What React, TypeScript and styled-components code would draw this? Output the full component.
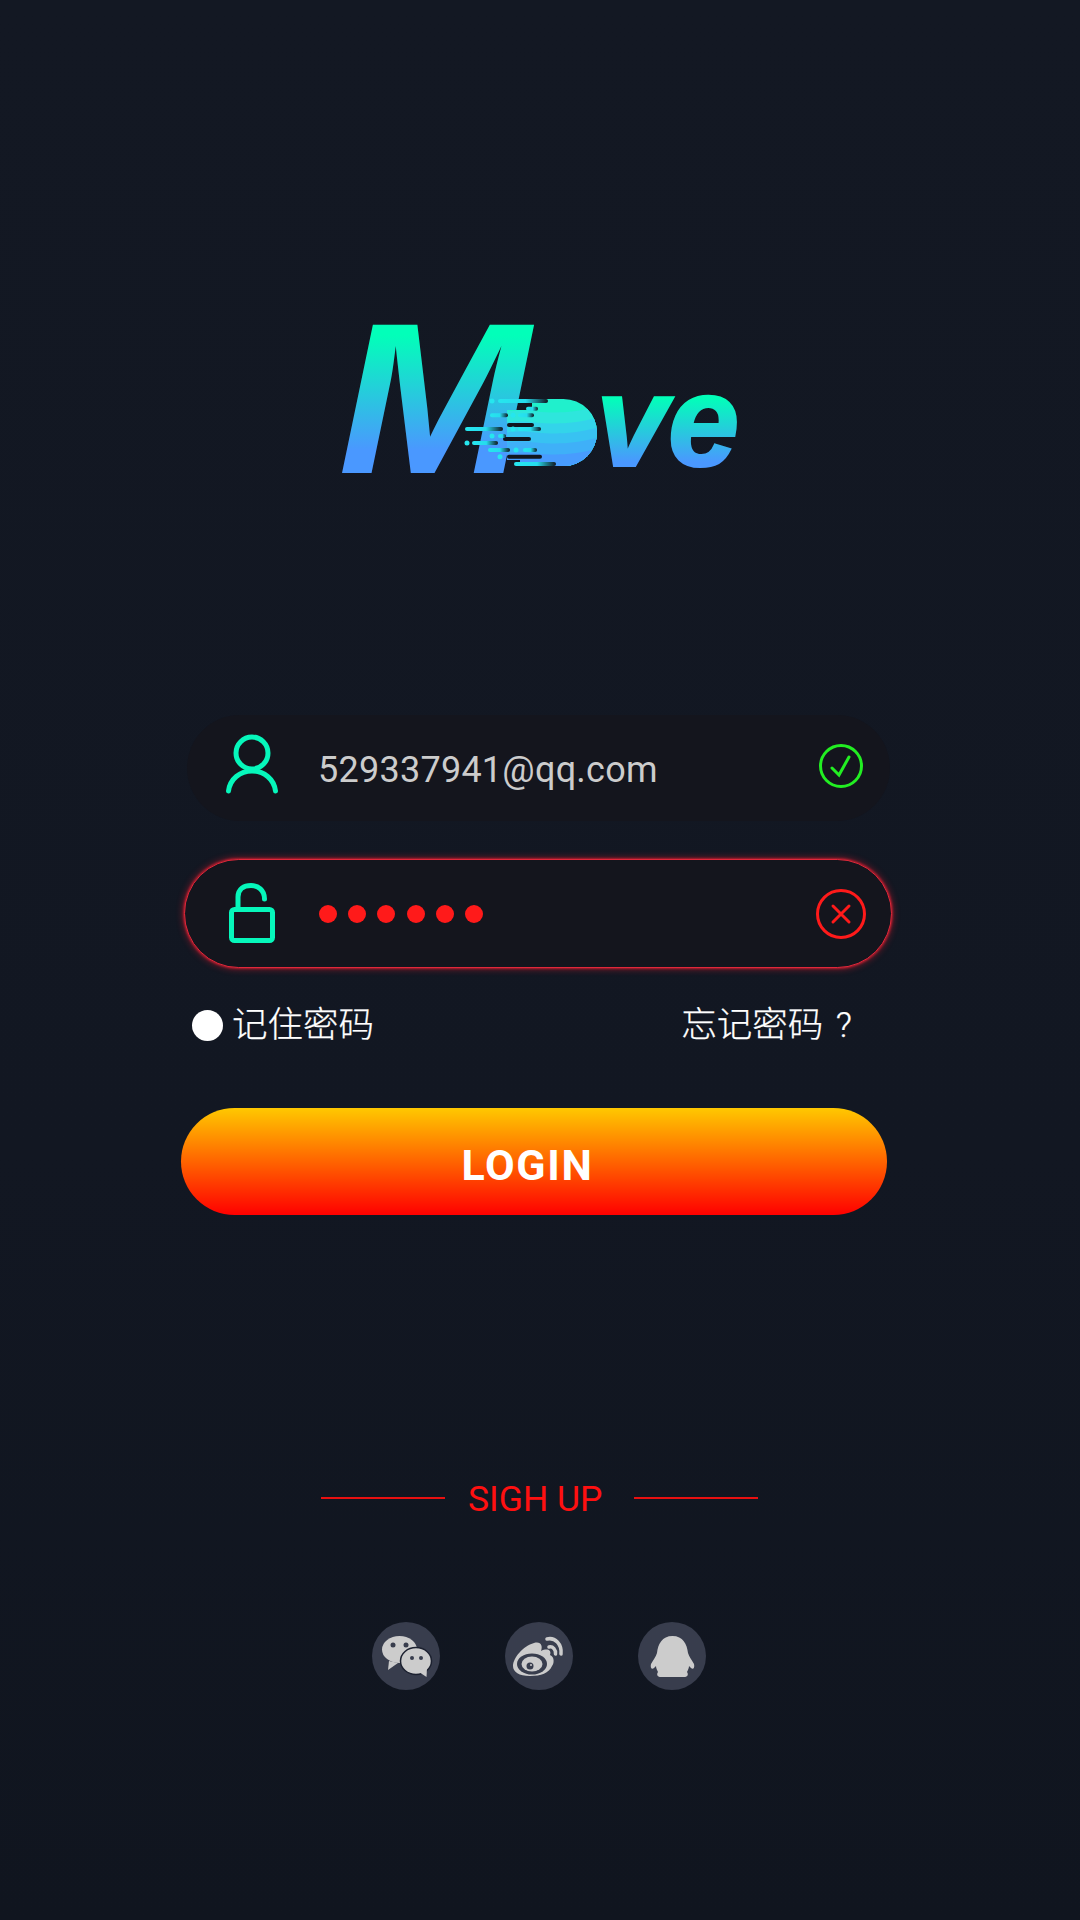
import { createGlobalStyle } from "styled-components";
import styled from "styled-components";

const GlobalStyle = createGlobalStyle`
  html, body {
    margin: 0;
    padding: 0;
    background: #121722;
  }
`;

const SANS = `Roboto, "Noto Sans CJK SC", sans-serif`;

const Page = styled.div`
  box-sizing: border-box;
  width: 1080px;
  height: 1920px;
  padding-top: 270px;
  overflow: hidden;
  background: linear-gradient(180deg, #131823 0%, #121722 60%, #10151f 100%);
  font-family: ${SANS};
`;

const LogoSvg = styled.svg`
  display: block;
  margin-left: 330px;
`;

const LogoWord = styled.text`
  font-family: "Liberation Sans", Arial, sans-serif;
  font-weight: 700;
  font-style: italic;
`;

const InputRow = styled.div<{ $error?: boolean }>`
  box-sizing: border-box;
  display: flex;
  align-items: center;
  margin-left: ${({ $error }) => ($error ? 184 : 187)}px;
  margin-top: ${({ $error }) => ($error ? 38 : 195)}px;
  width: ${({ $error }) => ($error ? 708 : 703)}px;
  height: ${({ $error }) => ($error ? 109 : 106)}px;
  padding: 0 ${({ $error }) => ($error ? 25 : 24)}px 0
    ${({ $error }) => ($error ? 38 : 36)}px;
  border-radius: 55px;
  background: #14151d;
  border: ${({ $error }) => ($error ? "1px solid #e0283a" : "none")};
  box-shadow: ${({ $error }) =>
    $error
      ? "0 0 2px 1px rgba(230, 30, 50, 0.6), 0 0 7px 1px rgba(255, 30, 50, 0.45)"
      : "none"};
`;

const FieldIcon = styled.svg`
  flex: none;
  margin-right: 35px;
`;

const FieldText = styled.span`
  flex: 1;
  padding-top: 3px;
  font-size: 36px;
  line-height: 40px;
  letter-spacing: 0.25px;
  color: #cccccc;
`;

const Dots = styled.div`
  flex: 1;
  display: flex;
  gap: 11.2px;
  padding-left: 1px;
`;

const Dot = styled.span`
  width: 18px;
  height: 18px;
  border-radius: 50%;
  background: #ff1a1a;
`;

const Options = styled.div`
  display: flex;
  justify-content: space-between;
  align-items: center;
  margin: 37px 0 0 192px;
  width: 660px;
  height: 40px;
  color: #ffffff;
  font-size: 35.5px;
  font-weight: 300;
  line-height: 40px;
  word-spacing: 4px;
  -webkit-text-stroke: 0.25px #ffffff;
`;

const Remember = styled.label`
  display: flex;
  align-items: center;
  gap: 9px;
`;

const Radio = styled.span`
  width: 31px;
  height: 31px;
  border-radius: 50%;
  background: #ffffff;
`;

const LoginButton = styled.button`
  display: block;
  box-sizing: border-box;
  margin: 63px 0 0 181px;
  width: 706px;
  height: 107px;
  padding: 7px 13px 0 0;
  border: none;
  border-radius: 54px;
  background: linear-gradient(180deg, #ffc800 0%, #ff0000 100%);
  color: #ffffff;
  font-family: ${SANS};
  font-size: 43px;
  font-weight: 700;
  letter-spacing: 1.6px;
`;

const SignUp = styled.div`
  display: flex;
  align-items: center;
  margin: 263px 0 0 321px;
  height: 40px;
  color: #ff1010;
  font-size: 35.5px;
  line-height: 40px;
`;

const SignLine = styled.span`
  width: 124px;
  height: 2px;
  background: #e81010;
`;

const SignText = styled.span`
  margin: 2px 32px 0 23px;
`;

const Socials = styled.div`
  display: flex;
  gap: 65px;
  margin: 104px 0 0 372px;
`;

const SocialButton = styled.svg`
  display: block;
  width: 68px;
  height: 68px;
`;

const WAVES: [number, string][] = [
  [412, "#2ee6dc"],
  [423, "#33d4ea"],
  [433, "#38c2f2"],
  [443, "#3fb0f8"],
  [454, "#489cfe"],
];

// x, width, y of each streak crossing the logo's "o"
const STREAKS: [number, number, number][] = [
  [498, 50, 401],
  [526, 12, 408.7],
  [490, 18, 415.3],
  [518, 16, 415.3],
  [465, 38, 429],
  [518, 23, 429],
  [498, 8, 436],
  [472, 26, 443],
  [488, 22, 450],
  [523, 14, 450],
  [514, 42, 464],
];

const DARK_STREAKS: [number, number, number][] = [
  [507, 27, 425],
  [503, 28, 439],
  [507, 35, 456.7],
];

const STREAK_DOTS: [number, number][] = [
  [492, 401],
  [513, 415.3],
  [513, 429],
  [492, 436],
  [467, 443],
  [516, 450],
  [500, 456.7],
];

function Logo() {
  return (
    <LogoSvg width={420} height={250} viewBox="330 270 420 250">
      <defs>
        <linearGradient id="mFill" gradientUnits="userSpaceOnUse" x1="0" y1="335" x2="0" y2="450">
          <stop offset="0" stopColor="#02ffb9" />
          <stop offset="1" stopColor="#4a98ff" />
        </linearGradient>
        <linearGradient id="veFill" gradientUnits="userSpaceOnUse" x1="0" y1="398" x2="0" y2="462">
          <stop offset="0" stopColor="#02ffb9" />
          <stop offset="1" stopColor="#4a98ff" />
        </linearGradient>
        <linearGradient id="streak">
          <stop offset="0" stopColor="#26e6ee" />
          <stop offset="0.55" stopColor="#26dcee" />
          <stop offset="1" stopColor="#11161f" />
        </linearGradient>
        <clipPath id="blob">
          <path d="M532 399H563.500A33.500 33.500 0 0 1 563.500 466H520V460H507V410H532Z" />
        </clipPath>
      </defs>
      <LogoWord
        x={338}
        y={473}
        fontSize={215}
        fill="url(#mFill)"
        textLength={192}
        lengthAdjust="spacingAndGlyphs"
      >
        M
      </LogoWord>
      <g clipPath="url(#blob)">
        <rect x={505} y={395} width={95} height={75} fill="#20f0cc" />
        {WAVES.map(([y, color]) => (
          <path
            key={y}
            d={`M505 ${y}C530 ${y - 6} 550 ${y + 8} 600 ${y - 6}V470H505Z`}
            fill={color}
          />
        ))}
      </g>
      {DARK_STREAKS.map(([x, width, y]) => (
        <rect key={`${x}-${y}`} x={x} y={y - 2} width={width} height={4} rx={2} fill="#11161f" />
      ))}
      {STREAKS.map(([x, width, y]) => (
        <rect key={`${x}-${y}`} x={x} y={y - 2} width={width} height={4} rx={2} fill="url(#streak)" />
      ))}
      {STREAK_DOTS.map(([cx, cy]) => (
        <circle key={`${cx}-${cy}`} cx={cx} cy={cy} r={2.500} fill="#26e6ee" />
      ))}
      <LogoWord
        x={596}
        y={466}
        fontSize={129}
        fill="url(#veFill)"
        stroke="url(#veFill)"
        strokeWidth={2}
      >
        ve
      </LogoWord>
    </LogoSvg>
  );
}

function UserIcon() {
  return (
    <FieldIcon width={60} height={68} viewBox="0 0 60 68" fill="none" stroke="#06f7bb" strokeWidth={5} strokeLinecap="round">
      <circle cx={29} cy={19} r={16} />
      <path d="M5.500 57C7 45 17 37 29 37S51 45 52.500 57" />
    </FieldIcon>
  );
}

function LockIcon() {
  return (
    <FieldIcon width={60} height={68} viewBox="0 0 60 68" fill="none" stroke="#06f7bb" strokeWidth={5} strokeLinecap="round" strokeLinejoin="round">
      <rect x={8.500} y={29.500} width={41} height={31} rx={3} />
      <path d="M15 28V17C15 9 21 5.500 28 5.500S41.500 10 41.500 19" />
    </FieldIcon>
  );
}

function CheckIcon() {
  return (
    <svg width={50} height={50} viewBox="0 0 50 50" fill="none" stroke="#22ee22" strokeWidth={3} strokeLinecap="round" style={{ flex: "none" }}>
      <circle cx={25} cy={23} r={20.500} />
      <path d="M16 25L23 32L33 14" />
    </svg>
  );
}

function CrossIcon() {
  return (
    <svg width={50} height={50} viewBox="0 0 50 50" fill="none" stroke="#ff1a1a" strokeWidth={3} strokeLinecap="round" style={{ flex: "none" }}>
      <circle cx={25} cy={25} r={23.500} />
      <path d="M17 17L33 33M33 17L17 33" />
    </svg>
  );
}

function WechatIcon() {
  return (
    <SocialButton viewBox="0 0 68 68">
      <circle cx={34} cy={34} r={34} fill="#383d4d" />
      <path d="M16 48L17 39L26 41Z" fill="#cccccc" />
      <ellipse cx={27.500} cy={27.500} rx={17.500} ry={13.500} fill="#cccccc" />
      <circle cx={21} cy={23} r={2.500} fill="#383d4d" />
      <circle cx={34} cy={23} r={2.500} fill="#383d4d" />
      <ellipse cx={44} cy={39} rx={15.500} ry={13.500} fill="#cccccc" stroke="#1c2130" strokeWidth={1.500} />
      <path d="M47 50L55 46L54.500 55Z" fill="#cccccc" />
      <circle cx={40} cy={36} r={2} fill="#383d4d" />
      <circle cx={49} cy={36} r={2} fill="#383d4d" />
    </SocialButton>
  );
}

function WeiboIcon() {
  return (
    <SocialButton viewBox="0 0 68 68">
      <circle cx={34} cy={34} r={34} fill="#383d4d" />
      <path
        d="M8 44C8 36 18 24 29 21C36 19 38 24 36 29C42 26 47 28 45 33C50 35 49 42 47 44C44 51 36 54 25 54C14 54 8 50 8 44Z"
        fill="#cccccc"
      />
      <ellipse cx={27} cy={42} rx={15} ry={10.500} fill="#383d4d" />
      <ellipse cx={27} cy={42} rx={10.500} ry={7.500} fill="#cccccc" />
      <circle cx={25} cy={44} r={3.500} fill="#383d4d" />
      <circle cx={26} cy={43} r={1} fill="#cccccc" />
      <g fill="none" stroke="#cccccc" strokeWidth={3.500} strokeLinecap="round">
        <path d="M42 17C50 15 57 22 56 32" />
        <path d="M44 25C48 24 51 28 50.500 32" />
      </g>
    </SocialButton>
  );
}

function PenguinIcon() {
  return (
    <SocialButton viewBox="0 0 68 68">
      <circle cx={34} cy={34} r={34} fill="#383d4d" />
      <path
        d="M34.500 14C45 14 49 22 50 31C51 35 54 38 56 42C57 46 55 48 53 46L51 44C51 46 50 48 49 50C51 53 49 55 46 55H23C20 55 18 53 20 50C19 48 18 46 18 44L16 46C14 48 12 46 13 42C15 38 18 35 19 31C20 22 24 14 34.500 14Z"
        fill="#cccccc"
      />
    </SocialButton>
  );
}

export default function App() {
  return (
    <Page>
      <GlobalStyle />
      <Logo />
      <InputRow>
        <UserIcon />
        <FieldText>529337941@qq.com</FieldText>
        <CheckIcon />
      </InputRow>
      <InputRow $error>
        <LockIcon />
        <Dots>
          {[0, 1, 2, 3, 4, 5].map((i) => (
            <Dot key={i} />
          ))}
        </Dots>
        <CrossIcon />
      </InputRow>
      <Options>
        <Remember>
          <Radio />
          记住密码
        </Remember>
        <span>忘记密码&nbsp;?</span>
      </Options>
      <LoginButton>LOGIN</LoginButton>
      <SignUp>
        <SignLine />
        <SignText>SIGH UP</SignText>
        <SignLine />
      </SignUp>
      <Socials>
        <WechatIcon />
        <WeiboIcon />
        <PenguinIcon />
      </Socials>
    </Page>
  );
}
